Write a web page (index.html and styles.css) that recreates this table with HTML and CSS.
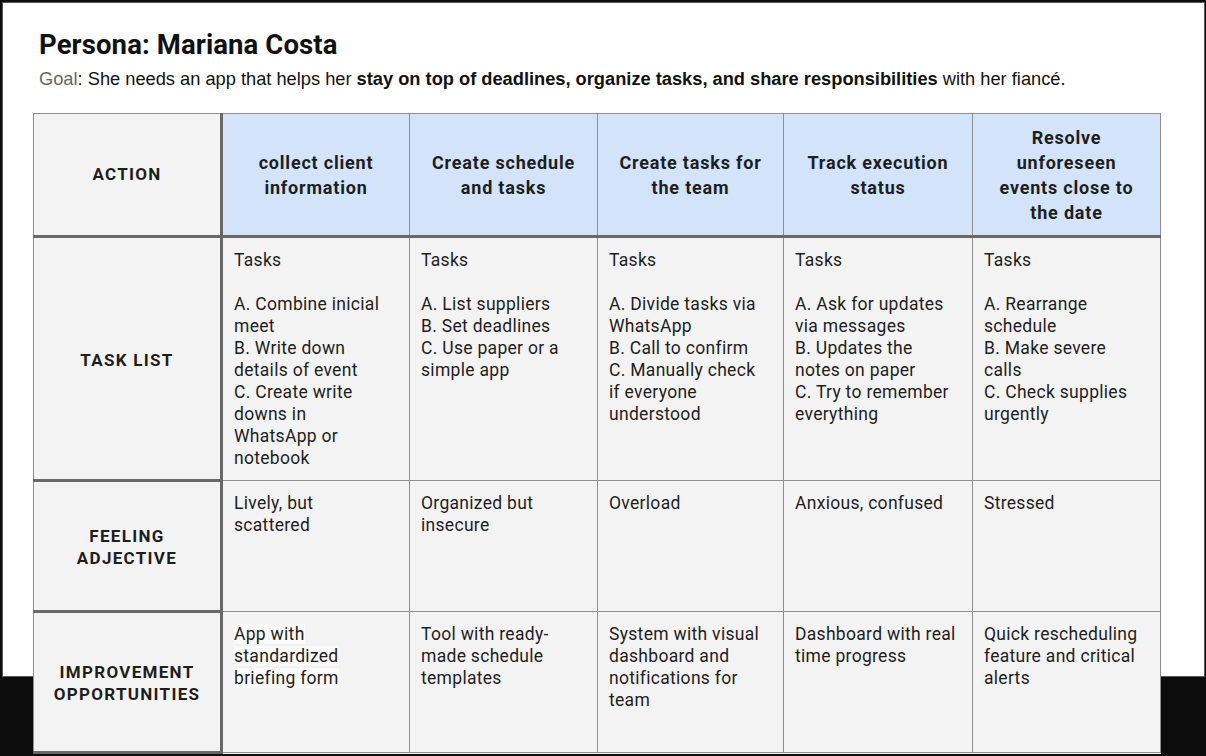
FILE: index.html
```html
<!DOCTYPE html>
<html lang="en">
<head>
<meta charset="utf-8">
<title>Persona: Mariana Costa</title>
<link rel="stylesheet" href="styles.css">
</head>
<body>
<div class="panel">
  <h1 class="title">Persona: Mariana Costa</h1>
  <p class="goal"><span class="goal-label">Goal</span>: She needs an app that helps her <b>stay on top of deadlines, organize tasks, and share responsibilities</b> with her fiancé.</p>
  <table class="journey">
    <colgroup>
      <col class="c-label"><col class="c1"><col class="c2"><col class="c3"><col class="c4"><col class="c5">
    </colgroup>
    <tr class="r-head">
      <th class="label">ACTION</th>
      <th>collect client<br>information</th>
      <th>Create schedule<br>and tasks</th>
      <th>Create tasks for<br>the team</th>
      <th>Track execution<br>status</th>
      <th>Resolve<br>unforeseen<br>events close to<br>the date</th>
    </tr>
    <tr class="r-tasks">
      <th class="label">TASK LIST</th>
      <td>Tasks<br><br>A. Combine inicial<br>meet<br>B. Write down<br>details of event<br>C. Create write<br>downs in<br>WhatsApp or<br>notebook</td>
      <td>Tasks<br><br>A. List suppliers<br>B. Set deadlines<br>C. Use paper or a<br>simple app</td>
      <td>Tasks<br><br>A. Divide tasks via<br>WhatsApp<br>B. Call to confirm<br>C. Manually check<br>if everyone<br>understood</td>
      <td>Tasks<br><br>A. Ask for updates<br>via messages<br>B. Updates the<br>notes on paper<br>C. Try to remember<br>everything</td>
      <td>Tasks<br><br>A. Rearrange<br>schedule<br>B. Make severe<br>calls<br>C. Check supplies<br>urgently</td>
    </tr>
    <tr class="r-feel">
      <th class="label">FEELING<br>ADJECTIVE</th>
      <td>Lively, but<br>scattered</td>
      <td>Organized but<br>insecure</td>
      <td>Overload</td>
      <td>Anxious, confused</td>
      <td>Stressed</td>
    </tr>
    <tr class="r-impr">
      <th class="label">IMPROVEMENT<br>OPPORTUNITIES</th>
      <td><span class="hl">App with</span><br><span class="hl">standardized</span><br><span class="hl">briefing form</span></td>
      <td>Tool with ready-<br>made schedule<br>templates</td>
      <td>System with visual<br>dashboard and<br>notifications for<br>team</td>
      <td>Dashboard with real<br>time progress</td>
      <td>Quick rescheduling<br>feature and critical<br>alerts</td>
    </tr>
  </table>
</div>
</body>
</html>
```

FILE: styles.css
```css
html, body {
  margin: 0;
  padding: 0;
}
body {
  background: #0c0c0c;
  width: 1206px;
  height: 756px;
  overflow: hidden;
  font-family: "Roboto", "Liberation Sans", sans-serif;
  color: #1e1e1e;
}
.panel {
  margin: 2px 1px 0 2px;
  height: 675px;
  background: #ffffff;
  border: 1px solid #5a5a5a;
  padding: 0 0 0 30px;
  box-sizing: border-box;
}
.title {
  margin: 27px 0 0 6px;
  font-size: 27.5px;
  line-height: 30px;
  font-weight: 700;
  letter-spacing: 0.1px;
  color: #111;
}
.goal {
  margin: 8px 0 0 6px;
  font-family: "Liberation Sans", Arial, sans-serif;
  font-size: 18.25px;
  line-height: 22px;
  color: #111;
}
.goal-label {
  color: #666;
}
.journey {
  margin-top: 23px;
  border-collapse: collapse;
  table-layout: fixed;
  width: 1127px;
  background: #f3f3f3;
}
.journey .c-label { width: 188px; }
.journey .c1 { width: 188px; }
.journey .c2 { width: 188px; }
.journey .c3 { width: 186px; }
.journey .c4 { width: 189px; }
.journey .c5 { width: 188px; }
.journey th,
.journey td {
  border: 1px solid #8f8f8f;
  padding: 11px 11px 9px;
  font-size: 17.5px;
  letter-spacing: 0.3px;
  line-height: 22px;
  vertical-align: top;
  text-align: left;
  font-weight: 400;
}
.journey .r-head th {
  background: #d2e3fa;
  font-weight: 700;
  font-size: 18px;
  letter-spacing: 0.8px;
  text-align: center;
  vertical-align: middle;
  line-height: 25px;
  border-bottom: 3px solid #686868;
  padding: 8px 2px;
}
.journey .r-head th.label {
  background: #f3f3f3;
}
.journey th.label {
  font-weight: 700;
  font-size: 17px;
  letter-spacing: 1.3px;
  text-align: center;
  vertical-align: middle;
  border-right: 3px solid #686868;
  border-bottom: 3px solid #686868;
}
.r-head { height: 123px; }
.r-tasks { height: 244px; }
.r-feel { height: 131px; }
.r-impr { height: 141px; }
.hl {
  background: #fafafa;
}
```
